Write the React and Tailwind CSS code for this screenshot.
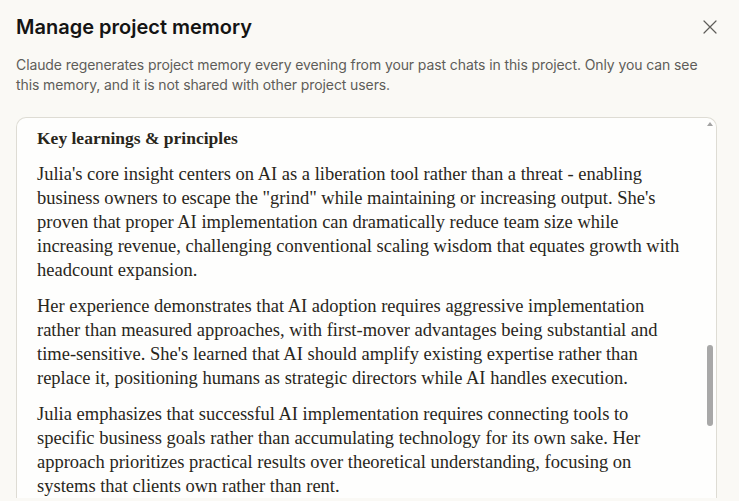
import React from 'react';

const paragraphs = [
  'Julia\'s core insight centers on AI as a liberation tool rather than a threat - enabling business owners to escape the "grind" while maintaining or increasing output. She\'s proven that proper AI implementation can dramatically reduce team size while increasing revenue, challenging conventional scaling wisdom that equates growth with headcount expansion.',
  "Her experience demonstrates that AI adoption requires aggressive implementation rather than measured approaches, with first-mover advantages being substantial and time-sensitive. She's learned that AI should amplify existing expertise rather than replace it, positioning humans as strategic directors while AI handles execution.",
  'Julia emphasizes that successful AI implementation requires connecting tools to specific business goals rather than accumulating technology for its own sake. Her approach prioritizes practical results over theoretical understanding, focusing on systems that clients own rather than rent.',
];

const CloseIcon = () => (
  <svg width="14" height="14" viewBox="0 0 14 14" fill="none" stroke="currentColor" strokeWidth="1.2" strokeLinecap="round">
    <path d="M1 1L13 13M13 1L1 13" />
  </svg>
);

export default function App() {
  return (
    <div className="h-screen overflow-hidden bg-[#faf9f5] px-4 pt-[14px]" style={{ fontFamily: 'Inter, "Noto Sans", sans-serif' }}>
      <div className="flex items-center justify-between">
        <h1 className="text-[20px] leading-[26px] font-semibold text-[#141413]">Manage project memory</h1>
        <button type="button" className="mr-[6px] text-[#5e5d59]">
          <CloseIcon />
        </button>
      </div>

      <p className="mt-[15px] text-[14px] leading-[20px] tracking-[-0.1px] text-[#5e5d59]">
        Claude regenerates project memory every evening from your past chats in this project. Only you can see this memory, and it is not shared with other project users.
      </p>

      <div className="relative mt-[22px] mr-[6px] rounded-t-[10px] border border-b-0 border-[#dedcd4] bg-[#fefefd] pt-[8px] pl-5 pr-9">
        <div className="text-[#29261b]" style={{ fontFamily: '"Liberation Serif", "Times New Roman", serif' }}>
          <h2 className="text-[17.5px] leading-[24px] font-bold">Key learnings &amp; principles</h2>
          <div className="mt-3 flex flex-col gap-3">
            {paragraphs.map((text, i) => (
              <p key={i} className="text-[18.5px] leading-[24px]">{text}</p>
            ))}
          </div>
        </div>

        {/* scrollbar */}
        <div className="absolute right-[3px] top-[4px] h-0 w-0 border-x-[3px] border-b-[4px] border-x-transparent border-b-[#a3a3a3]" />
        <div className="absolute right-[3px] top-[227px] h-[81px] w-[6px] rounded-full bg-[#a8a8a8]" />
      </div>
    </div>
  );
}
